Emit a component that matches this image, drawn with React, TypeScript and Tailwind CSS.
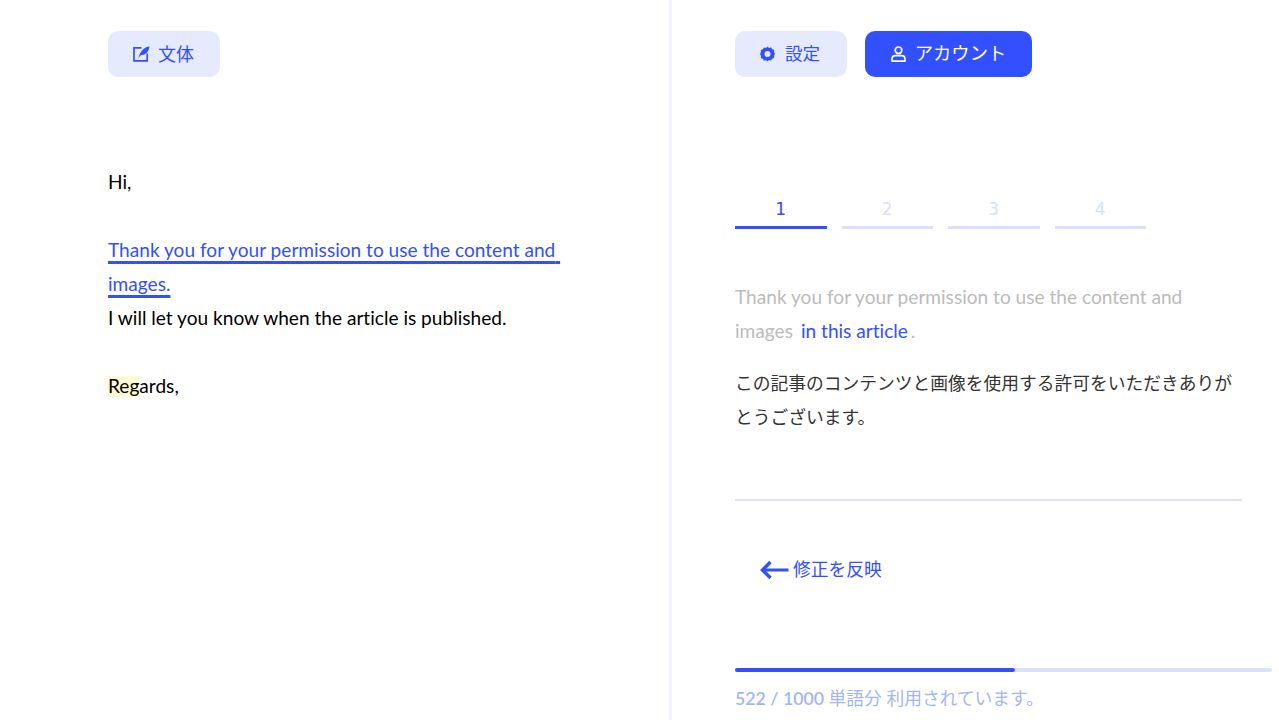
import { useState } from "react";

const jp = "font-['Lato','Noto_Sans_CJK_JP',sans-serif] [font-variant-ligatures:none]";

function QuillIcon() {
  return (
    <svg width="17" height="16" viewBox="0 0 17 16" fill="none" className="shrink-0">
      <path d="M8.500 1.800H1V14.800H14.200V7.500" stroke="#3350ff" strokeWidth="1.700" />
      <path d="M16.500 .5C12 .8 7.500 4 5 13C6.200 10.800 7.300 9.500 8.600 9C13 9.200 15.800 5.500 16.500 .5Z" fill="#3350ff" />
    </svg>
  );
}

function GearIcon() {
  return (
    <svg width="15" height="16" viewBox="0 0 15 16" className="shrink-0">
      <path
        fillRule="evenodd"
        d="M7.500 .4l1.500 1.500 2.100-.6 1 1.900 2.100.6-.2 2.200L15 8l-1 1.900.2 2.200-2.100.6-1 1.900L9 14.100l-1.500 1.500L6 14.100l-2.100.6-1-1.900-2.100-.6.2-2.200L0 8l1-1.900L.8 3.900l2.100-.6 1-1.900 2.100.6zM7.500 5a3 3 0 100 6 3 3 0 000-6z"
        fill="#3350ff"
      />
    </svg>
  );
}

function UserIcon() {
  return (
    <svg width="15" height="16" viewBox="0 0 15 16" fill="none" stroke="white" strokeWidth="1.700" className="shrink-0">
      <circle cx="7.500" cy="4.300" r="3.300" />
      <path d="M1 13.200C1 10.800 2.800 9.600 4.500 9.600H10.500C12.200 9.600 14 10.800 14 13.200V15.100H1Z" strokeLinejoin="round" />
    </svg>
  );
}

function BackArrow() {
  return (
    <svg width="29" height="20" viewBox="0 0 29 20" fill="none" className="mt-[2px] shrink-0">
      <path d="M28.500 10H3" stroke="#3350ff" strokeWidth="3" />
      <path d="M10.500 2L2.500 10L10.500 18" stroke="#3350ff" strokeWidth="3.400" />
    </svg>
  );
}

const steps = ["1", "2", "3", "4"];

export default function App() {
  const [step, setStep] = useState(0);

  return (
    <div className={`flex h-[720px] w-[1279px] overflow-hidden bg-white ${jp}`}>
      <div className="w-[672px] shrink-0 border-r-[3px] border-[#f1f3fe] pl-[108px] pt-[31px]">
        <button className="flex h-[46px] w-[112px] items-center justify-center gap-[8px] rounded-[10px] bg-[#e6eafe] pr-[1px] text-[18px] text-[#3350ff]">
          <QuillIcon />
          文体
        </button>
        <div className="mt-[88px] w-[470px] text-[19.100px] leading-[34px] text-black">
          <p>Hi,</p>
          <p className="mt-[34px] text-[#3350ff] underline decoration-[3px] underline-offset-[4px] [text-decoration-skip-ink:none]">
            Thank you for your permission to use the content and{"\u00a0"}
            <br />
            images.
          </p>
          <p>I will let you know when the article is published.</p>
          <p className="mt-[34px]">
            <span className="inline-block bg-[#fffbd0] pb-[2px] leading-[19px]">Reg</span>ards,
          </p>
        </div>
      </div>

      <div className="w-[600px] pl-[63px] pt-[31px]">
        <div className="flex gap-[18px]">
          <button className="flex h-[46px] w-[112px] items-center justify-center gap-[10px] rounded-[10px] bg-[#e6eafe] pr-[2px] text-[17.500px] text-[#3350ff]">
            <GearIcon />
            設定
          </button>
          <button className="flex h-[46px] w-[167px] items-center justify-center gap-[9px] rounded-[10px] bg-[#3350ff] text-[18.300px] text-white">
            <UserIcon />
            アカウント
          </button>
        </div>

        <div className="mt-[117px] flex gap-[15px]">
          {steps.map((s, i) => (
            <button
              key={s}
              onClick={() => setStep(i)}
              className={`h-[35px] w-[91.500px] border-b-[3px] pb-[2px] font-['DejaVu_Sans',sans-serif] text-[17px] leading-[18px] ${
                step === i ? "border-[#3350ff] text-[#3350ff]" : "border-[#d9e0fd] text-[#d9e0fd]"
              }`}
            >
              {s}
            </button>
          ))}
        </div>

        <div className="mt-[51px] w-[507px] leading-[34px]">
          <p className="text-[19.100px] text-[#bbbbbb]">
            Thank you for your permission to use the content and images
            <span className="ml-[8px] mr-[3px] text-[#3350ff]">in this article</span>.
          </p>
          <p className="mt-[18px] text-[17.750px] text-[#333333]">
            この記事のコンテンツと画像を使用する許可をいただきありがとうございます。
          </p>
        </div>

        <div className="mt-[65px] h-[2px] w-[507px] bg-[#dde3fc]" />

        <button className="ml-[25px] mt-[53px] flex items-center gap-[4px] text-[17.750px] leading-[30px] text-[#3350ff]">
          <BackArrow />
          修正を反映
        </button>

        <div className="mt-[84px] h-[4px] w-[537px] rounded-full bg-[#dce2fd]">
          <div className="h-full rounded-full bg-[#3350ff]" style={{ width: `${(522 / 1000) * 100}%` }} />
        </div>
        <p className="mt-[12px] text-[17.750px] leading-[28px] text-[#a4b6ee]">
          <span className="font-semibold">522 / 1000</span> 単語分 利用されています。
        </p>
      </div>
    </div>
  );
}
